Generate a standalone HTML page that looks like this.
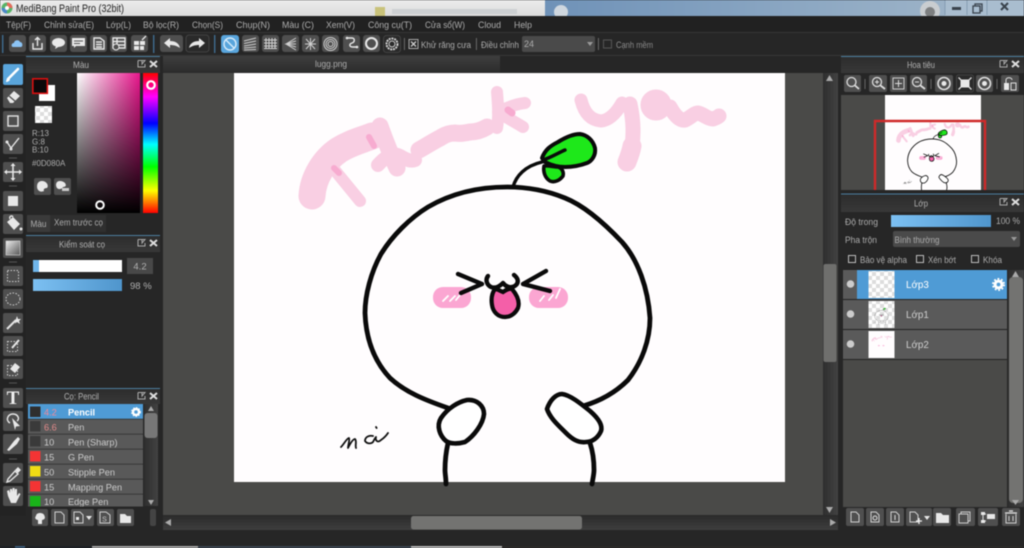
<!DOCTYPE html>
<html><head><meta charset="utf-8"><title>MediBang Paint Pro</title>
<style>
html,body{margin:0;padding:0;background:#262626;width:1024px;height:548px;overflow:hidden}
svg{display:block;position:absolute;left:0;top:0;filter:blur(.45px)}
text{font-family:"Liberation Sans","Noto Sans CJK JP",sans-serif;font-size:9px;fill:#acacac}
.b{fill:#4f4f4f}
.d{fill:#2a2a2a;stroke:#4a4a4a;stroke-width:.8}
.i{fill:#e8e8e8}
.s{fill:none;stroke:#e8e8e8;stroke-width:1.4}
.s2{fill:none;stroke:#d0d0d0;stroke-width:1}
.t{fill:#b0b0b0}
.sep{fill:#777}
.pk{fill:none;stroke:#f9cfe3;stroke-linecap:round;stroke-linejoin:round}
.pk2{fill:none;stroke:#f7abd0;stroke-linecap:round}
.bl{fill:none;stroke:#0a0a0a;stroke-width:4.8;stroke-linecap:round;stroke-linejoin:round}
.bln{fill:none;stroke:#0a0a0a;stroke-width:4.4;stroke-linecap:round;stroke-linejoin:round}
</style></head><body>
<svg width="1024" height="548" viewBox="0 0 1024 548" xmlns="http://www.w3.org/2000/svg">
<defs>
<linearGradient id="blue" x1="0" x2="1" y1="0" y2="0"><stop offset="0" stop-color="#7cc0f2"/><stop offset="1" stop-color="#4f95cc"/></linearGradient>
<linearGradient id="ttl" x1="0" x2="0" y1="0" y2="1"><stop offset="0" stop-color="#2c2c2c"/><stop offset="1" stop-color="#383838"/></linearGradient>
<linearGradient id="tab" x1="0" x2="0" y1="0" y2="1"><stop offset="0" stop-color="#3e3e3e"/><stop offset="1" stop-color="#2b2b2b"/></linearGradient>
<linearGradient id="sky" x1="0" x2="1" y1="0" y2="0"><stop offset="0" stop-color="#6f92b8"/><stop offset=".5" stop-color="#8aa6c2"/><stop offset="1" stop-color="#a5b9ca"/></linearGradient>
<linearGradient id="titlebg" x1="0" x2="0" y1="0" y2="1"><stop offset="0" stop-color="#ececec"/><stop offset="1" stop-color="#dcdcdc"/></linearGradient>
<linearGradient id="sv1" x1="0" x2="1" y1="0" y2="0"><stop offset="0" stop-color="#fff"/><stop offset="1" stop-color="#e8168c"/></linearGradient>
<linearGradient id="sv2" x1="0" x2="0" y1="0" y2="1"><stop offset="0" stop-color="#000" stop-opacity="0"/><stop offset="1" stop-color="#000"/></linearGradient>
<linearGradient id="hue" x1="0" x2="0" y1="0" y2="1"><stop offset="0" stop-color="#ff0000"/><stop offset=".17" stop-color="#ff00ff"/><stop offset=".36" stop-color="#0000ff"/><stop offset=".51" stop-color="#00ffff"/><stop offset=".67" stop-color="#00ff00"/><stop offset=".84" stop-color="#ffff00"/><stop offset="1" stop-color="#ff0000"/></linearGradient>
<linearGradient id="grad" x1="0" x2="1" y1="0" y2="1"><stop offset="0" stop-color="#eee"/><stop offset="1" stop-color="#555"/></linearGradient>
<linearGradient id="hbar" x1="0" x2="0" y1="0" y2="1"><stop offset="0" stop-color="#2a2a2a"/><stop offset="1" stop-color="#3e3e3e"/></linearGradient>
<linearGradient id="vbar" x1="0" x2="1" y1="0" y2="0"><stop offset="0" stop-color="#2e2e2e"/><stop offset="1" stop-color="#424242"/></linearGradient>
<pattern id="chk" width="8" height="8" patternUnits="userSpaceOnUse"><rect width="8" height="8" fill="#fff"/><rect width="4" height="4" fill="#ddd"/><rect x="4" y="4" width="4" height="4" fill="#ddd"/></pattern>
<clipPath id="navclip"><rect x="885" y="95" width="96" height="95"/></clipPath>

<g id="artcolor">
<g class="pk">
<path stroke-width="27" d="M312 196C313 178 324 160 339 150C350 143 362 140 372 136"/>
<path stroke-width="12" d="M333 168L360 201"/>
<path stroke-width="17" d="M380 126C385 140 391 155 397 168"/>
<path stroke-width="14" d="M378 165C386 156 393 152 400 156C405 159 410 162 415 160"/>
<path stroke-width="17" d="M419 150C426 146 434 141 440 138C446 134 450 133 455 133C461 134 465 133 470 132C476 132 482 130 487 127"/>
<path stroke-width="12" d="M497 92C498 104 499 116 497 128"/>
<path stroke-width="12" d="M525 103C515 104 506 108 498 112C507 118 515 122 523 127"/>
<path stroke-width="13" d="M581 100C584 112 590 120 601 121C611 120 618 110 622 103"/>
<path stroke-width="15" d="M630 104C633 118 634 132 632 146"/>
<path stroke-width="19" d="M632 146C631 152 629 157 627 162"/>
<circle cx="656" cy="105" r="13" stroke-width="5" fill="#f9cfe3"/>
<path stroke-width="15" d="M670 107C675 116 680 121 685 120C690 118 694 113 698 113C703 114 708 119 713 119C716 118 718 117 719 116"/>
</g>
<path class="pk2" stroke-width="6" d="M334 168L339 173"/>
<path class="pk2" stroke-width="6" d="M369 137L374 146"/>
<path class="pk2" stroke-width="7" d="M508 110L512 113"/>
<rect x="433" y="287" width="38" height="21" rx="10" fill="#fba6d2"/>
<rect x="529" y="287" width="39" height="21" rx="10" fill="#fba6d2"/>
<path d="M443 301L448 296M450 301L455 296M456 300L460 295M540 301L544 296M549 300L553 295M556 298L560 289" stroke="#fff" stroke-width="1.8" stroke-linecap="round"/>
</g>

<g id="artline">
<path d="M448 408C425 400 405 392 390 378C375 362 366 340 365 313C365 295 371 272 381 254C392 236 410 218 428 207C452 193 480 187 507 187C530 187 548 191 565 198C585 206 605 224 622 242C638 260 648 288 650 318C650 340 642 362 628 380C615 393 600 401 583 406" class="bl"/>
<path d="M441 418C448 408 458 402 467 400C477 399 484 406 484 414C483 424 474 436 465 442C458 444 450 444 446 441C440 436 436 426 441 418Z" fill="#fff" stroke="#0a0a0a" stroke-width="4.6" stroke-linejoin="round"/>
<path d="M547 409C550 400 556 394 562 394C570 395 580 403 590 411C598 418 603 425 601 431C598 438 592 442 586 442C578 443 572 439 566 433C558 425 550 418 547 409Z" fill="#fff" stroke="#0a0a0a" stroke-width="4.6" stroke-linejoin="round"/>
<path class="bl" stroke-width="4.4" d="M448 443C446 452 445 462 445 470C445 474 446 478 446 484"/>
<path class="bl" stroke-width="4.4" d="M590 443C593 452 594 462 594 470C594 474 593 478 592 484"/>
<path class="bln" d="M458 274L482 284L461 293"/>
<path class="bln" d="M546 271L523 284L550 291"/>
<path class="bln" d="M488 276C485 280 487 285 491 287C496 289 500 286 503 283C506 287 512 289 516 285C519 282 518 278 514 275"/>
<path d="M495 289C498 289 500 291 503 292C506 290 509 288 512 289C517 295 520 302 518 308C515 314 510 317 505 317C498 317 493 312 492 305C491 299 492 293 495 289Z" fill="#f45fa8" stroke="#0a0a0a" stroke-width="4.2"/>
<path d="M542 158C545 150 550 146 558 142C566 137 573 134 580 134C587 135 593 140 595 148C596 155 592 161 587 163C579 166 571 167 565 167C557 167 551 165 545 162Z" fill="#1ee81a" stroke="#0a0a0a" stroke-width="4" stroke-linejoin="round"/>
<path d="M544 166C543 172 545 178 550 181C555 183 560 180 563 176C564 172 562 168 558 167C553 167 548 165 544 166Z" fill="#1ee81a" stroke="#0a0a0a" stroke-width="3.6" stroke-linejoin="round"/>
<path d="M513 187C516 176 525 166 542 162M543 160C550 158 558 153 565 150" fill="none" stroke="#0a0a0a" stroke-width="3.4" stroke-linecap="round"/>
<path d="M341 447C344 444 347 438 349 438C350 440 348 445 348 448C350 444 353 439 355 439C357 441 355 445 356 448M373 436C369 435 365 437 365 441C367 444 371 444 373 442C374 440 375 438 376 437C375 441 378 443 381 440C384 438 386 436 388 433M376 427L376.6 428" fill="none" stroke="#111" stroke-width="1.8" stroke-linecap="round" stroke-linejoin="round"/>
</g>
</defs>

<!-- window title bar -->
<rect width="1024" height="16" fill="url(#titlebg)"/>
<rect x="545" y="0" width="479" height="16" fill="url(#sky)"/>
<circle cx="561" cy="12" r="7" fill="#cfd7df"/>
<circle cx="930" cy="11" r="10" fill="#c9cdd0"/><circle cx="930" cy="12" r="5" fill="#7d7f80"/>
<rect x="375" y="7" width="10" height="9" fill="#c9c27a"/>
<rect x="392" y="9" width="125" height="5" fill="#cdd0d2"/>
<rect x="945" y="0" width="79" height="16" fill="#a9bdcf"/>
<path d="M945 0V15M967 0V15M987 0V15" stroke="#7e96ad" stroke-width=".8"/>
<rect x="952" y="7" width="9" height="3" fill="#39424c"/>
<rect x="975" y="4" width="7" height="7" fill="none" stroke="#39424c" stroke-width="1.3"/><rect x="973" y="6" width="7" height="7" fill="#a9bdcf" stroke="#39424c" stroke-width="1.3"/>
<path d="M1001 3L1008 10M1008 3L1001 10" stroke="#39424c" stroke-width="2"/>
<circle cx="7" cy="8" r="5.5" fill="#58b368"/><path d="M7 2.5A5.5 5.5 0 0 1 12.5 8H7Z" fill="#e56a5b"/><path d="M7 8H1.5A5.5 5.5 0 0 0 7 13.5Z" fill="#4b87c7"/><circle cx="7" cy="8" r="2" fill="#fff"/>
<text x="16" y="12" textLength="108" lengthAdjust="spacingAndGlyphs" style="font-size:11.4px;fill:#222">MediBang Paint Pro (32bit)</text>

<!-- chrome -->
<rect y="16" width="1024" height="532" fill="#262626"/>
<rect y="16" width="1024" height="16" fill="#212121"/>
<rect y="32" width="1024" height=".8" fill="#3a3a3a"/>
<rect y="55" width="1024" height=".8" fill="#3a3a3a"/>
<text x="6" y="28" textLength="25" lengthAdjust="spacingAndGlyphs">Tệp(F)</text>
<text x="44" y="28" textLength="50" lengthAdjust="spacingAndGlyphs">Chỉnh sửa(E)</text>
<text x="106" y="28" textLength="25" lengthAdjust="spacingAndGlyphs">Lớp(L)</text>
<text x="143" y="28" textLength="36" lengthAdjust="spacingAndGlyphs">Bộ lọc(R)</text>
<text x="192" y="28" textLength="31" lengthAdjust="spacingAndGlyphs">Chọn(S)</text>
<text x="236" y="28" textLength="34" lengthAdjust="spacingAndGlyphs">Chụp(N)</text>
<text x="282" y="28" textLength="32" lengthAdjust="spacingAndGlyphs">Màu (C)</text>
<text x="326" y="28" textLength="29" lengthAdjust="spacingAndGlyphs">Xem(V)</text>
<text x="368" y="28" textLength="44" lengthAdjust="spacingAndGlyphs">Công cụ(T)</text>
<text x="425" y="28" textLength="40" lengthAdjust="spacingAndGlyphs">Cửa sổ(W)</text>
<text x="478" y="28" textLength="23" lengthAdjust="spacingAndGlyphs">Cloud</text>
<text x="514" y="28" textLength="18" lengthAdjust="spacingAndGlyphs">Help</text>

<!-- toolbar -->
<rect x="2" y="35" width="1.4" height="18" fill="#3f6d90"/>
<rect x="153" y="35" width="1.4" height="18" fill="#3f6d90"/>
<rect x="214" y="35" width="1.4" height="18" fill="#3f6d90"/>
<g class="b">
<rect x="9" y="35" width="17" height="17" rx="3"/><rect x="29" y="35" width="17" height="17" rx="3"/><rect x="50" y="35" width="17" height="17" rx="3"/><rect x="70" y="35" width="17" height="17" rx="3"/><rect x="90" y="35" width="17" height="17" rx="3"/><rect x="110" y="35" width="17" height="17" rx="3"/><rect x="131" y="35" width="17" height="17" rx="3"/>
<rect x="160" y="35" width="23" height="17" rx="3"/>
<rect x="242" y="35" width="17" height="17" rx="3"/><rect x="262" y="35" width="17" height="17" rx="3"/><rect x="282" y="35" width="17" height="17" rx="3"/><rect x="302" y="35" width="17" height="17" rx="3"/><rect x="322" y="35" width="17" height="17" rx="3"/><rect x="343" y="35" width="17" height="17" rx="3"/><rect x="363" y="35" width="17" height="17" rx="3"/>
</g>
<rect x="186" y="35" width="23" height="17" rx="3" class="d"/>
<rect x="383.5" y="35.5" width="17" height="17" rx="3" class="d"/>
<rect x="221" y="35" width="18" height="18" rx="3" fill="#59a5dc"/>
<path d="M13 47C11 47 11 43 14 43C14 40 19 39 20 42C23 42 23 47 21 47Z" fill="#8cc4f5"/>
<path class="s" d="M33 43V49H42V43M37.5 46V38M35 40L37.5 37.500L40 40"/>
<ellipse cx="58.500" cy="42.500" rx="6.500" ry="4.500" class="i"/><path d="M56 46L55 49L60 46Z" class="i"/>
<path d="M72 38H85V46H76L74 48V46H72Z" class="i"/><path d="M74 41H83M74 43.500H80" stroke="#555" stroke-width="1"/>
<path class="s" d="M94 38H100L104 41V49H94ZM96 42H102M96 44.500H102M96 47H102" stroke-width="1"/>
<path class="s" d="M113 38H125V48H113ZM113 41.500H125M113 45H125M117 38V48" stroke-width="1"/><circle cx="116" cy="47" r="3" fill="#4f4f4f" stroke="#e8e8e8"/>
<path class="i" d="M134 41H139V45H134ZM140 41H145V45H140ZM134 46H139V50H134ZM140 46H144V50H140Z"/><path d="M142 40L146 36" stroke="#e8e8e8" stroke-width="1.3"/>
<path class="i" d="M164 43L170 38V41C175 41 179 43 180 48C177 46 174 45 170 45V48Z"/>
<path class="i" d="M205 43L199 38V41C194 41 190 43 189 48C192 46 195 45 199 45V48Z"/>
<circle cx="230" cy="44" r="6" fill="none" stroke="#d7ebfa" stroke-width="1.4"/><path d="M226 40L234 48" stroke="#d7ebfa" stroke-width="1.4"/>
<path class="s2" d="M244 41L256 38M244 43.500L256 41M244 46L256 44M244 48L256 47M244 50L256 49.500"/>
<path class="s2" d="M266 38V49M269 38V49M272 38V49M275 38V49M264 40H277M264 43H277M264 46H277M264 48.500H277"/>
<path class="s2" d="M296 38L286 44L296 50M296 41L286 44L296 47M296 44H286"/>
<path class="s2" stroke-width="1.3" d="M305 44H316M310.500 38V50M306 39L315 49M315 39L306 49"/>
<g fill="none" stroke="#d0d0d0"><circle cx="330.500" cy="44" r="6.500"/><circle cx="330.500" cy="44" r="4.500"/><circle cx="330.500" cy="44" r="2.500"/></g>
<path class="s" d="M347 38H352C355 38 355 42 352 43C349 44 349 47 353 47H357"/><circle cx="347" cy="38" r="1.300" class="i"/><circle cx="357" cy="47" r="1.300" class="i"/>
<circle cx="371.500" cy="43.500" r="5.500" fill="none" stroke="#e8e8e8" stroke-width="2"/>
<circle cx="392" cy="44" r="5.500" fill="none" stroke="#cfcfcf" stroke-width="2" stroke-dasharray="2 .8"/><circle cx="392" cy="44" r="3" fill="none" stroke="#cfcfcf"/>
<rect x="404" y="38" width=".8" height="12" class="sep"/>
<rect x="409" y="39.500" width="9" height="9" fill="none" stroke="#aaa"/><path d="M411 41.500L416 46.500M416 41.500L411 46.500" stroke="#ccc" stroke-width="1.300"/>
<text x="421" y="48" textLength="50" lengthAdjust="spacingAndGlyphs">Khử răng cưa</text>
<rect x="476" y="38" width=".8" height="12" class="sep"/>
<text x="481" y="48" textLength="38" lengthAdjust="spacingAndGlyphs">Điều chỉnh</text>
<rect x="522" y="36" width="73" height="16" rx="2" fill="#4a4a4a"/><text x="524" y="47">24</text>
<path d="M587 42H593L590 46Z" fill="#999"/>
<rect x="598" y="38" width=".8" height="12" class="sep"/>
<rect x="603.500" y="40" width="8" height="8" fill="none" stroke="#555"/>
<text x="616" y="48" textLength="37" lengthAdjust="spacingAndGlyphs" style="fill:#8a8a8a">Cạnh mềm</text>

<!-- document tab & canvas -->
<rect x="163" y="56" width="337" height="17" fill="url(#tab)"/>
<text x="315" y="67" textLength="32" lengthAdjust="spacingAndGlyphs">lugg.png</text>
<rect x="163" y="73" width="660" height="442" fill="#4a4a48"/>
<rect x="234" y="73" width="551" height="409" fill="#fffdfe"/>
<use href="#artcolor"/>
<use href="#artline"/>
<!-- canvas scrollbars -->
<rect x="823" y="73" width="15" height="443" fill="url(#vbar)"/>
<rect x="823.500" y="264" width="13" height="98" rx="2" fill="#6f6f6d"/>
<path d="M826 81L829.500 75L833 81Z" fill="#aaa"/><path d="M826 507H833L829.500 513Z" fill="#aaa"/>
<rect x="163" y="515" width="675" height="15" fill="url(#hbar)"/>
<rect x="411" y="516" width="171" height="13.500" rx="2.500" fill="#737371"/>
<path d="M171 519V526L165 522.500Z" fill="#aaa"/><path d="M830 519V526L836 522.500Z" fill="#aaa"/>

<!-- left tools -->
<rect x="0" y="56" width="26" height="460" fill="#232323"/>
<g class="b">
<rect x="3" y="88" width="20" height="20" rx="2"/><rect x="3" y="111" width="20" height="20" rx="2"/><rect x="3" y="134" width="20" height="20" rx="2"/><rect x="3" y="162" width="20" height="20" rx="2"/><rect x="3" y="191" width="20" height="20" rx="2"/><rect x="3" y="214" width="20" height="20" rx="2"/><rect x="3" y="238" width="20" height="20" rx="2"/><rect x="3" y="266" width="20" height="20" rx="2"/><rect x="3" y="289" width="20" height="20" rx="2"/><rect x="3" y="313" width="20" height="20" rx="2"/><rect x="3" y="336" width="20" height="20" rx="2"/><rect x="3" y="359" width="20" height="20" rx="2"/><rect x="3" y="388" width="20" height="20" rx="2"/><rect x="3" y="411" width="20" height="20" rx="2"/><rect x="3" y="434" width="20" height="20" rx="2"/><rect x="3" y="463" width="20" height="20" rx="2"/><rect x="3" y="486" width="20" height="20" rx="2"/>
</g>
<path d="M9 158H17M9 186H17M9 262H17M9 383H17M9 459H17" stroke="#555" stroke-width="1"/>
<rect x="3" y="64" width="20" height="21" rx="2" fill="#5aa5db"/>
<path d="M8 79L18 69" stroke="#fff" stroke-width="2.600" stroke-linecap="round"/><path d="M6 82C6 79 8 78 9 78L10 80C9 81 8 82 6 82Z" fill="#fff"/>
<path d="M7 98L14 91L20 96L13 103H10Z" class="i"/><path d="M9 96L16 102" stroke="#4f4f4f" stroke-width="1.300"/>
<rect x="8" y="116" width="10" height="10" fill="none" stroke="#e4e4e4" stroke-width="1.400"/>
<path class="s" stroke-width="2" d="M7 142L11 148L19 138"/><circle cx="7" cy="142" r="1.500" class="i"/><circle cx="11" cy="149" r="1.500" class="i"/>
<path d="M13 164V180M5 172H21" stroke="#e4e4e4" stroke-width="1.600"/><path d="M13 163L10.500 166H15.500ZM13 181L10.500 178H15.500ZM4 172L7 169.500V174.500ZM22 172L19 169.500V174.500Z" class="i"/>
<rect x="8" y="196" width="10" height="10" class="i"/>
<path d="M7 222L13 217L20 224L14 230Z" class="i"/><path d="M10 219C9 216 12 215 13 217" class="s" stroke-width="1"/><circle cx="21" cy="229" r="1.500" class="i"/>
<rect x="6" y="241" width="14" height="14" fill="url(#grad)" stroke="#ddd" stroke-width=".6"/>
<rect x="7.500" y="270.500" width="11" height="11" fill="none" stroke="#d0d0d0" stroke-dasharray="1.500 1.500"/>
<ellipse cx="13" cy="299" rx="7" ry="6" fill="none" stroke="#d0d0d0" stroke-dasharray="1.500 1.500"/>
<path d="M7 329L16 320" stroke="#e4e4e4" stroke-width="2"/><path d="M17 316L18 319L21 319L19 321L20 324L17 322L15 323.500L15.500 320.500Z" class="i"/>
<rect x="7.500" y="341.500" width="10" height="10" fill="none" stroke="#d0d0d0" stroke-dasharray="1.500 1.500"/><path d="M12 348L19 340" stroke="#e8e8e8" stroke-width="2"/>
<rect x="7.500" y="365.500" width="10" height="10" fill="none" stroke="#d0d0d0" stroke-dasharray="1.500 1.500"/><path d="M10 369L15 363L20 367L15 373Z" class="i"/>
<text x="13" y="404" text-anchor="middle" style="font-family:'Liberation Serif',serif;font-size:19px;font-weight:bold;fill:#eee">T</text>
<path class="s" d="M10 423C5 420 8 414 13 414C18 414 20 419 17 421"/><path d="M12 418L20 426L16 426.500L15 430Z" class="i"/>
<path d="M7 450L14 441L18 437L20 439L17 444L9 451Z" class="i"/>
<path d="M8 479L15 471L18 474L10 481L7 482Z" fill="none" stroke="#e4e4e4" stroke-width="1.400"/><path d="M15 470L18 467L21 470L18 473Z" class="i"/>
<path d="M8 496L7 491L9 490L10 493V489L12 489L12.500 492V488L14.500 488L15 492V489H17V496L19 493L20.500 494L16 503H11Z" class="i"/>

<!-- Colour panel -->
<rect x="26" y="56" width="134" height="176" fill="#262626"/>
<rect x="26" y="56" width="134" height="17" fill="url(#ttl)"/><rect x="26" y="56" width="134" height="1" fill="#4c7e9f"/>
<text x="73" y="68" textLength="16" lengthAdjust="spacingAndGlyphs" class="t">Màu</text>
<g id="pbtn"><path d="M138 60.500H142V64L145 60.500H142M138 60.500V67H145V64" fill="none" stroke="#aaa" stroke-width="1"/><path d="M150 61L157 67M157 61L150 67" stroke="#ddd" stroke-width="2"/></g>
<rect x="39" y="85" width="16" height="16" fill="#fff"/>
<rect x="32.800" y="78.800" width="14.500" height="14.500" fill="#0d080a" stroke="#d70f0f" stroke-width="1.600"/>
<rect x="35" y="106" width="17" height="17" fill="url(#chk)"/>
<text x="32" y="136" style="font-size:8px">R:13</text><text x="32" y="144.500" style="font-size:8px">G:8</text><text x="32" y="152.500" style="font-size:8px">B:10</text><text x="32" y="166" style="font-size:8px">#0D080A</text>
<rect x="34" y="178" width="17" height="17" rx="2" class="b"/><rect x="54" y="178" width="17" height="17" rx="2" class="b"/>
<path d="M42 181C37 181 36.500 186 37.500 189C39 192 42 192 44 191C43 189 45 188 47 188C49 186 47 181 42 181Z" class="i"/>
<path d="M60 181C56 181 55 185 57 188C59 190 62 189 63 187C65 187 67 186 65 183C64 182 62 181 60 181Z" class="i"/><rect x="62" y="188" width="7" height="3" fill="#ccc"/>
<rect x="77" y="73" width="63" height="140" fill="url(#sv1)"/><rect x="77" y="73" width="63" height="140" fill="url(#sv2)"/>
<rect x="143" y="73" width="15" height="140" fill="url(#hue)"/>
<circle cx="151" cy="85" r="3.800" fill="none" stroke="#fff" stroke-width="2.200"/>
<circle cx="100" cy="205" r="3.800" fill="none" stroke="#fff" stroke-width="2"/>
<rect x="27" y="215" width="23" height="17" fill="#3a3a3a"/>
<text x="30.500" y="227" textLength="16" lengthAdjust="spacingAndGlyphs">Màu</text>
<rect x="50" y="215" width="56" height="17" fill="#2f2f2f"/>
<text x="54" y="225.500" textLength="49" lengthAdjust="spacingAndGlyphs">Xem trước cọ</text>

<!-- Brush control -->
<rect x="26" y="234" width="134" height="150" fill="#262626"/>
<rect x="26" y="235" width="134" height="17" fill="url(#ttl)"/><rect x="26" y="235" width="134" height="1" fill="#4c7e9f"/>
<text x="59" y="247.500" textLength="46" lengthAdjust="spacingAndGlyphs" class="t">Kiểm soát cọ</text>
<use href="#pbtn" y="179"/>
<rect x="33" y="260" width="89" height="12" fill="#fff"/><rect x="33" y="260" width="6" height="12" fill="#6fb6ec"/>
<rect x="127" y="258" width="26" height="16" fill="#484848"/><text x="140" y="269.500" text-anchor="middle" class="t" style="font-size:9.500px">4.2</text>
<rect x="33" y="279" width="89" height="12" fill="url(#blue)"/>
<text x="130" y="289" class="t" style="font-size:9.500px">98 %</text>

<!-- Brush list -->
<rect x="26" y="388" width="134" height="142" fill="#262626"/>
<rect x="26" y="388" width="134" height="16" fill="url(#ttl)"/><rect x="26" y="388" width="134" height="1" fill="#4c7e9f"/>
<text x="64" y="399.500" textLength="35" lengthAdjust="spacingAndGlyphs" class="t">Cọ: Pencil</text>
<use href="#pbtn" y="332"/>
<rect x="28" y="404" width="115" height="102.500" fill="#595959"/>
<rect x="28" y="404" width="115" height="15" fill="#4f9bd5"/>
<path d="M28 434.200H143M28 449.200H143M28 464.200H143M28 479.200H143M28 494.200H143M28 419.200H143" stroke="#333" stroke-width=".8"/>
<rect x="30" y="406.500" width="10.500" height="10.500" fill="#2e2e2e"/><rect x="30" y="421" width="10.500" height="10.500" fill="#3a3a3a"/><rect x="30" y="436" width="10.500" height="10.500" fill="#3a3a3a"/><rect x="30" y="451" width="10.500" height="10.500" fill="#f43434"/><rect x="30" y="466" width="10.500" height="10.500" fill="#f0dc14"/><rect x="30" y="481" width="10.500" height="10.500" fill="#f43434"/><rect x="30" y="496" width="10.500" height="10.500" fill="#19b419"/>
<g style="font-size:9.200px">
<text x="44" y="415.500" style="fill:#ef8a9a;font-size:9.200px">4.2</text><text x="44" y="430.500" style="fill:#e28a8a;font-size:9.200px">6.6</text><text x="44" y="445.500" style="fill:#ccc;font-size:9.200px">10</text><text x="44" y="460.500" style="fill:#ccc;font-size:9.200px">15</text><text x="44" y="475.500" style="fill:#ccc;font-size:9.200px">50</text><text x="44" y="490.500" style="fill:#ccc;font-size:9.200px">15</text><text x="44" y="505" style="fill:#ccc;font-size:9.200px">10</text>
<text x="68" y="415.500" style="fill:#fff;font-weight:bold;font-size:9.200px">Pencil</text><text x="68" y="430.500" style="fill:#ccc;font-size:9.200px">Pen</text><text x="68" y="445.500" style="fill:#ccc;font-size:9.200px">Pen (Sharp)</text><text x="68" y="460.500" style="fill:#ccc;font-size:9.200px">G Pen</text><text x="68" y="475.500" style="fill:#ccc;font-size:9.200px">Stipple Pen</text><text x="68" y="490.500" style="fill:#ccc;font-size:9.200px">Mapping Pen</text><text x="68" y="505" style="fill:#ccc;font-size:9.200px">Edge Pen</text>
</g>
<circle cx="136" cy="412" r="3" fill="none" stroke="#fff" stroke-width="2.400"/><circle cx="136" cy="412" r="4.200" fill="none" stroke="#fff" stroke-width="1.400" stroke-dasharray="1.400 1.400"/>
<rect x="28" y="506.500" width="130" height="3" fill="#262626"/>
<rect x="144" y="404" width="14" height="102" fill="url(#vbar)"/><rect x="144.500" y="413" width="13" height="25" rx="3" fill="#777"/>
<path d="M148 411L151 406L154 411Z" fill="#aaa"/><path d="M148 500H154L151 505Z" fill="#aaa"/>
<g class="b"><rect x="32" y="509" width="16" height="17" rx="2"/><rect x="51" y="509" width="17" height="17" rx="2"/><rect x="71" y="509" width="23" height="17" rx="2"/><rect x="97" y="509" width="17" height="17" rx="2"/><rect x="117" y="509" width="17" height="17" rx="2"/></g>
<rect x="150" y="509" width="6" height="17" rx="2" fill="#444"/>
<path d="M36 516C36 512 44 512 44.500 516C46 519 43 520 42 520V524H38V520C36 520 34 518 36 516Z" class="i"/>
<path class="s2" d="M55 512H61L64 515V523H55Z"/>
<path class="s2" d="M74 512H80L83 515V523H74Z"/><rect x="76" y="517" width="3" height="3" class="i"/><path d="M86 516H92L89 520Z" class="i"/>
<path class="s2" d="M100 512H106L110 515V523H100Z"/><text x="104.500" y="521.500" text-anchor="middle" style="font-size:7px;fill:#ccc">S</text>
<path d="M120 514H125L127 516H131V523H120Z" class="i"/>

<!-- Navigator -->
<rect x="841" y="56" width="183" height="136" fill="#262626"/>
<rect x="841" y="56" width="183" height="17" fill="url(#ttl)"/><rect x="841" y="56" width="183" height="1" fill="#4c7e9f"/>
<text x="907" y="68" textLength="28" lengthAdjust="spacingAndGlyphs" class="t">Hoa tiêu</text>
<use href="#pbtn" x="862"/>
<g class="b"><rect x="844" y="75" width="17" height="17" rx="2"/><rect x="869" y="75" width="18" height="17" rx="2"/><rect x="890" y="75" width="17" height="17" rx="2"/><rect x="910" y="75" width="17" height="17" rx="2"/><rect x="935" y="75" width="18" height="17" rx="2"/><rect x="976" y="75" width="17" height="17" rx="2"/><rect x="1001" y="75" width="18" height="17" rx="2"/></g>
<rect x="956.500" y="75" width="17" height="17" rx="2" class="d"/>
<path d="M865 79V89M931 79V89M997 79V89" stroke="#666"/>
<circle cx="851.500" cy="82" r="4.500" fill="none" stroke="#ddd" stroke-width="1.300"/><path d="M855 85.500L859 89" stroke="#ddd" stroke-width="1.800"/>
<circle cx="877" cy="82" r="4.500" fill="none" stroke="#ddd" stroke-width="1.300"/><path d="M875 82H879M877 80V84" stroke="#ddd"/><path d="M880.500 85.500L885 89" stroke="#ddd" stroke-width="1.800"/>
<rect x="893" y="78" width="11" height="11" fill="none" stroke="#ccc"/><path d="M895 83.500H902M898.500 80V87" stroke="#ddd"/>
<circle cx="917" cy="82" r="4.500" fill="none" stroke="#ddd" stroke-width="1.300"/><path d="M915 82H919" stroke="#ddd"/><path d="M920.500 85.500L925 89" stroke="#ddd" stroke-width="1.800"/>
<circle cx="944" cy="83.500" r="6" fill="none" stroke="#ddd" stroke-width="1.600"/><circle cx="944" cy="83.500" r="2.500" class="i"/>
<rect x="960.500" y="79.500" width="9" height="8" class="i"/><path d="M958.500 77.500L961 80M971.500 77.500L969 80M958.500 89.500L961 87M971.500 89.500L969 87" stroke="#ddd" stroke-width="1.300"/>
<circle cx="984.500" cy="83.500" r="6" fill="none" stroke="#ddd" stroke-width="1.600"/><circle cx="984.500" cy="83.500" r="2.500" class="i"/>
<rect x="1004" y="83" width="5" height="7" class="i"/><rect x="1011" y="83" width="5" height="7" fill="none" stroke="#ddd"/><path d="M1006 83V80C1006 77 1012 77 1012 80" fill="none" stroke="#ddd"/>
<rect x="841" y="95" width="183" height="95" fill="#4a4a48"/>
<rect x="885" y="95" width="96" height="95" fill="#fffdfe"/>
<g clip-path="url(#navclip)"><g transform="translate(844.800 106.800) scale(.172)"><use href="#artcolor"/><use href="#artline"/></g></g>
<path d="M875 190V121H985V190" fill="none" stroke="#cf2a2a" stroke-width="2.400"/>

<!-- Layers -->
<rect x="841" y="192" width="183" height="338" fill="#262626"/>
<rect x="841" y="194" width="183" height="18" fill="url(#ttl)"/><rect x="841" y="193.500" width="183" height="1" fill="#4c7e9f"/>
<text x="914" y="206.500" textLength="14" lengthAdjust="spacingAndGlyphs" class="t">Lớp</text>
<use href="#pbtn" x="862" y="138"/>
<text x="845" y="225" textLength="33" lengthAdjust="spacingAndGlyphs">Độ trong</text>
<rect x="891" y="215" width="100" height="12" fill="url(#blue)"/>
<text x="996" y="224" textLength="24" lengthAdjust="spacingAndGlyphs">100 %</text>
<text x="845" y="243" textLength="32" lengthAdjust="spacingAndGlyphs">Pha trộn</text>
<rect x="893" y="231" width="127" height="16" rx="2" fill="#4a4a4a"/>
<text x="894.500" y="243" textLength="45" lengthAdjust="spacingAndGlyphs">Bình thường</text>
<path d="M1011 237H1017L1014 241Z" fill="#999"/>
<g fill="none" stroke="#bbb"><rect x="848.500" y="255.500" width="7" height="7"/><rect x="916.500" y="255.500" width="7" height="7"/><rect x="971.500" y="255.500" width="7" height="7"/></g>
<text x="860" y="263" textLength="47" lengthAdjust="spacingAndGlyphs">Bảo vệ alpha</text><text x="928" y="263" textLength="28" lengthAdjust="spacingAndGlyphs">Xén bớt</text><text x="983" y="263" textLength="19" lengthAdjust="spacingAndGlyphs">Khóa</text>

<rect x="843" y="270" width="164" height="237" fill="#4a4a48"/>
<rect x="843" y="270" width="164" height="29" fill="#5a5a5a"/>
<rect x="857" y="270" width="150" height="29" fill="#4f9bd5"/>
<rect x="843" y="300" width="164" height="29" fill="#5a5a5a"/>
<rect x="843" y="330" width="164" height="29" fill="#5a5a5a"/>
<path d="M843 299.500H1007M843 329.500H1007M843 359.500H1007" stroke="#242424"/>
<circle cx="850.500" cy="284" r="3.800" fill="#ccc"/><circle cx="850.500" cy="314" r="3.800" fill="#ccc"/><circle cx="850.500" cy="344" r="3.800" fill="#ccc"/>
<rect x="868.500" y="271" width="26" height="27" fill="url(#chk)"/>
<rect x="868.500" y="301" width="26" height="27" fill="url(#chk)"/>
<g transform="translate(868.500 305) scale(.0475) translate(-234 -73)" opacity=".85"><use href="#artline"/></g>
<rect x="868.500" y="331" width="26" height="27" fill="#fffdfe"/>
<g transform="translate(868.500 335) scale(.0475) translate(-234 -73)"><use href="#artcolor"/></g>
<text x="906" y="288" style="fill:#fff;font-size:9.800px">Lớp3</text>
<text x="906" y="318" style="fill:#d0d0d0;font-size:9.800px">Lớp1</text>
<text x="906" y="348" style="fill:#d0d0d0;font-size:9.800px">Lớp2</text>
<circle cx="998.500" cy="284.500" r="3.400" fill="none" stroke="#fff" stroke-width="3"/><circle cx="998.500" cy="284.500" r="5.600" fill="none" stroke="#fff" stroke-width="1.800" stroke-dasharray="1.800 1.800"/>
<rect x="1008" y="270" width="16" height="237" fill="url(#vbar)"/>
<rect x="1009" y="277" width="14" height="226" rx="4" fill="#737371"/>
<path d="M1012 277L1015.500 271L1019 277Z" fill="#aaa"/><path d="M1012 500H1019L1015.500 505Z" fill="#aaa"/>
<g class="b"><rect x="846" y="508" width="18" height="18" rx="2"/><rect x="866" y="508" width="18" height="18" rx="2"/><rect x="886" y="508" width="18" height="18" rx="2"/><rect x="906" y="508" width="26" height="18" rx="2"/><rect x="933" y="508" width="18" height="18" rx="2"/><rect x="956" y="508" width="19" height="18" rx="2"/><rect x="978" y="508" width="20" height="18" rx="2"/><rect x="1002" y="508" width="18" height="18" rx="2"/></g>
<path class="s2" d="M851 512H856L859 515V522H851Z"/>
<path class="s2" d="M871 512H876L879 515V522H871Z"/><circle cx="875" cy="518" r="2" fill="none" stroke="#ddd"/>
<path class="s2" d="M891 512H896L899 515V522H891Z"/><path d="M895 515V520" stroke="#ddd"/>
<path class="s2" d="M910 512H915L918 515V522H910Z"/><path d="M916 521H922M919 518V524" stroke="#eee" stroke-width="1.300"/><path d="M924 516H930L927 520Z" class="i"/>
<path d="M936 513H941L943 515H949V523H936Z" class="i"/>
<rect x="961" y="512" width="9" height="9" fill="none" stroke="#ccc"/><rect x="959" y="514" width="9" height="9" fill="#4f4f4f" stroke="#ccc"/>
<path d="M981 514H986M981 521H986M983 512V523" stroke="#ddd" fill="none"/><rect x="987" y="514" width="8" height="5" class="i"/><rect x="981" y="512" width="4" height="3" class="i"/><rect x="981" y="520" width="4" height="3" class="i"/>
<path d="M1005 513H1017M1009 511H1013" stroke="#e4e4e4" stroke-width="1.300"/><path class="s2" d="M1006 514V523H1016V514M1009 516V521M1013 516V521"/>

<!-- bottom taskbar sliver -->
<rect y="546" width="1024" height="2" fill="#1e2226"/>
<rect x="15" y="546" width="10" height="2" fill="#3a5a78"/>
<rect x="92" y="546" width="106" height="2" fill="#a8a8a8"/>
<rect x="198" y="546" width="213" height="2" fill="#3a4450"/>
<rect x="411" y="546" width="91" height="2" fill="#b8b8b8"/>
<rect x="502" y="546" width="522" height="2" fill="#2c2a28"/>
</svg>
</body></html>
